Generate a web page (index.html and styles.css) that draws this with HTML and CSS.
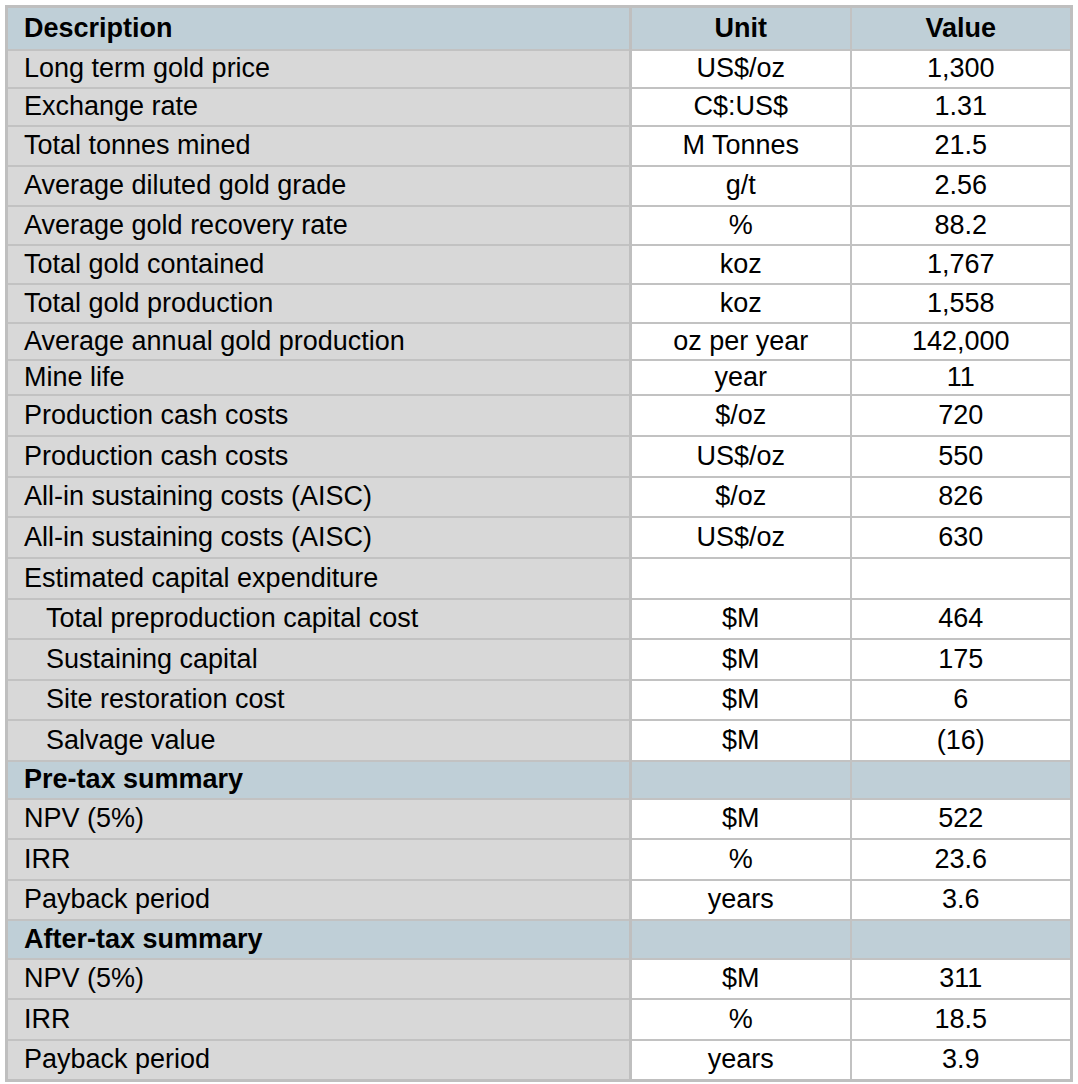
FILE: index.html
```html
<!DOCTYPE html>
<html lang="en">
<head>
<meta charset="utf-8">
<title>Key project parameters</title>
<link rel="stylesheet" href="styles.css">
</head>
<body>
<table class="summary">
  <colgroup>
    <col class="col-desc">
    <col class="col-unit">
    <col class="col-value">
  </colgroup>
  <thead>
    <tr class="head h43">
      <th class="desc">Description</th>
      <th>Unit</th>
      <th>Value</th>
    </tr>
  </thead>
  <tbody>
    <tr class="h38"><td class="desc">Long term gold price</td><td>US$/oz</td><td>1,300</td></tr>
    <tr class="h38"><td class="desc">Exchange rate</td><td>C$:US$</td><td>1.31</td></tr>
    <tr class="h40"><td class="desc">Total tonnes mined</td><td>M Tonnes</td><td>21.5</td></tr>
    <tr class="h40"><td class="desc">Average diluted gold grade</td><td>g/t</td><td>2.56</td></tr>
    <tr class="h39"><td class="desc">Average gold recovery rate</td><td>%</td><td>88.2</td></tr>
    <tr class="h39"><td class="desc">Total gold contained</td><td>koz</td><td>1,767</td></tr>
    <tr class="h39"><td class="desc">Total gold production</td><td>koz</td><td>1,558</td></tr>
    <tr class="h37"><td class="desc">Average annual gold production</td><td>oz per year</td><td>142,000</td></tr>
    <tr class="h35"><td class="desc">Mine life</td><td>year</td><td>11</td></tr>
    <tr class="h41"><td class="desc">Production cash costs</td><td>$/oz</td><td>720</td></tr>
    <tr class="h41"><td class="desc">Production cash costs</td><td>US$/oz</td><td>550</td></tr>
    <tr class="h40"><td class="desc">All-in sustaining costs (AISC)</td><td>$/oz</td><td>826</td></tr>
    <tr class="h41"><td class="desc">All-in sustaining costs (AISC)</td><td>US$/oz</td><td>630</td></tr>
    <tr class="h41"><td class="desc">Estimated capital expenditure</td><td></td><td></td></tr>
    <tr class="h40"><td class="desc sub">Total preproduction capital cost</td><td>$M</td><td>464</td></tr>
    <tr class="h41"><td class="desc sub">Sustaining capital</td><td>$M</td><td>175</td></tr>
    <tr class="h40"><td class="desc sub">Site restoration cost</td><td>$M</td><td>6</td></tr>
    <tr class="h41"><td class="desc sub">Salvage value</td><td>$M</td><td>(16)</td></tr>
    <tr class="section h38"><td class="desc">Pre-tax summary</td><td></td><td></td></tr>
    <tr class="h40"><td class="desc">NPV (5%)</td><td>$M</td><td>522</td></tr>
    <tr class="h41"><td class="desc">IRR</td><td>%</td><td>23.6</td></tr>
    <tr class="h40"><td class="desc">Payback period</td><td>years</td><td>3.6</td></tr>
    <tr class="section h39"><td class="desc">After-tax summary</td><td></td><td></td></tr>
    <tr class="h40"><td class="desc">NPV (5%)</td><td>$M</td><td>311</td></tr>
    <tr class="h41"><td class="desc">IRR</td><td>%</td><td>18.5</td></tr>
    <tr class="h41"><td class="desc">Payback period</td><td>years</td><td>3.9</td></tr>
  </tbody>
</table>
</body>
</html>
```

FILE: styles.css
```css
html, body {
  margin: 0;
  padding: 0;
  background: #ffffff;
}

body {
  padding: 5px;
  font-family: "Liberation Sans", Arial, Helvetica, sans-serif;
  font-size: 27px;
  color: #000000;
}

.summary {
  border-collapse: collapse;
  table-layout: fixed;
  width: 1065px;
  border: 3px solid #bfbfbf;
}

.col-desc { width: 624px; }
.col-unit { width: 220px; }
.col-value { width: 221px; }

.summary th,
.summary td {
  padding: 0;
  border: 2px solid #c2c2c2;
  text-align: center;
  vertical-align: middle;
  line-height: 1;
  background: #ffffff;
  white-space: nowrap;
}

.summary th {
  font-weight: bold;
  background: #bfcfd7;
}

.summary .desc {
  text-align: left;
  padding-left: 16px;
  background: #d8d8d8;
  border-right: 3px solid #bfbfbf;
}

.summary th.desc {
  background: #bfcfd7;
}

.summary .sub {
  padding-left: 38px;
}

.section td,
.section td.desc {
  background: #bfcfd7;
  font-weight: bold;
}

.h35 { height: 35px; }
.h37 { height: 37px; }
.h38 { height: 38px; }
.h39 { height: 39px; }
.h40 { height: 40px; }
.h41 { height: 41px; }
.h43 { height: 43px; }
```
